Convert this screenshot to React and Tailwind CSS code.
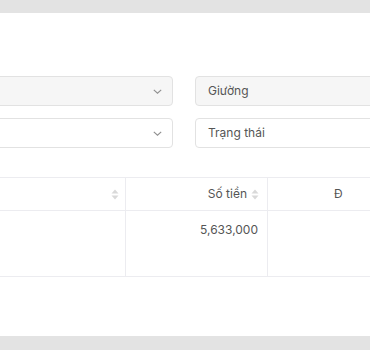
import React from "react";

const SortIcon = () => (
  <svg width="8" height="11" viewBox="0 0 8 11" className="inline-block">
    <path d="M4 0.5 L7.5 4.5 H0.5 Z" fill="#d9d9d9" />
    <path d="M4 10.5 L7.5 6.5 H0.5 Z" fill="#d9d9d9" />
  </svg>
);

const Chevron = () => (
  <svg width="9" height="5" viewBox="0 0 9 5" fill="none">
    <path d="M0.8 0.8 L4.5 4.2 L8.2 0.8" stroke="#8f8f8f" strokeWidth="1.1" />
  </svg>
);

const SelectBox = ({ label, filled, chevron }) => (
  <div
    className={`h-[30px] rounded-[4px] border border-[#e2e2e2] flex items-center justify-between pl-[12px] pr-[10px] text-[12px] text-[#555] ${
      filled ? "bg-[#f6f6f6]" : "bg-white"
    }`}
  >
    <span>{label}</span>
    {chevron && <Chevron />}
  </div>
);

export default function App() {
  return (
    <div
      className="w-[370px] h-[350px] overflow-hidden bg-[#e3e3e3] pt-[13px]"
      style={{ fontFamily: "Inter, 'Liberation Sans', sans-serif" }}
    >
      <div className="h-[323px] bg-white overflow-hidden">
        <div className="ml-[-200px] w-[800px] pt-[63px]">
          <div className="grid grid-cols-[373px_373px] gap-x-[22px] gap-y-[12px]">
            <SelectBox label="" filled chevron />
            <SelectBox label="Giường" filled />
            <SelectBox label="" chevron />
            <SelectBox label="Trạng thái" />
          </div>
        </div>
        <div className="mt-[29px] w-[370px] text-[12px] text-[#555]">
          <div className="flex h-[34px] border-y border-[#ececf0]">
            <div className="w-[125px] flex items-center justify-end pr-[6px]">
              <SortIcon />
            </div>
            <div className="w-[142px] border-l border-[#ececf0] flex items-center justify-end gap-[4px] pr-[8px]">
              <span>Số tiền</span>
              <SortIcon />
            </div>
            <div className="flex-1 border-l border-[#ececf0] flex items-center pl-[66px]">
              <span>Đ</span>
            </div>
          </div>
          <div className="flex h-[66px] border-b border-[#ececf0]">
            <div className="w-[125px]" />
            <div className="w-[142px] border-l border-[#ececf0] flex justify-end pr-[9px] pt-[10px]">
              <span>5,633,000</span>
            </div>
            <div className="flex-1 border-l border-[#ececf0]" />
          </div>
        </div>
      </div>
    </div>
  );
}
